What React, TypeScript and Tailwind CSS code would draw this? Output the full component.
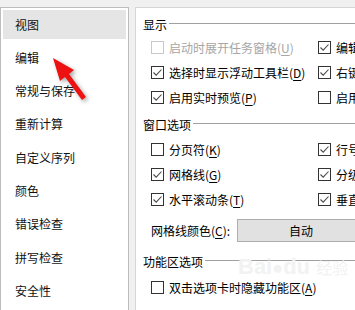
import React from "react";

const font = { fontFamily: '"Noto Sans CJK SC", "Noto Sans", sans-serif' };

const menu = ["视图", "编辑", "常规与保存", "重新计算", "自定义序列", "颜色", "错误检查", "拼写检查", "安全性"];

function Box({ checked, disabled }: { checked?: boolean; disabled?: boolean }) {
    return (
        <svg width="13" height="13" viewBox="0 0 13 13" className="shrink-0">
            <rect x="0.5" y="0.5" width="12" height="12" fill="#fff" stroke={disabled ? "#c8c8c8" : "#333"} />
            {checked && <polyline points="2.5,6.5 5.2,9.2 10.5,3.5" fill="none" stroke="#4a4a4a" strokeWidth="1.1" />}
        </svg>
    );
}

function Label({ text, k, disabled }: { text: string; k?: string; disabled?: boolean }) {
    return (
        <span className={`whitespace-nowrap ${disabled ? "text-[#a6a6a6]" : "text-black"}`}>
            {text}
            {k && (
                <>
                    (<span className="underline underline-offset-2">{k}</span>)
                </>
            )}
        </span>
    );
}

function Check({ text, k, checked, disabled }: { text: string; k?: string; checked?: boolean; disabled?: boolean }) {
    return (
        <div className="flex items-center gap-[5px] w-[167px] shrink-0">
            <Box checked={checked} disabled={disabled} />
            <Label text={text} k={k} disabled={disabled} />
        </div>
    );
}

function Header({ title, className }: { title: string; className: string }) {
    return (
        <div className={`flex items-center h-[18px] ${className}`}>
            <span className="whitespace-nowrap text-black">{title}</span>
            <div className="flex-1 h-px bg-[#a0a0a0] ml-[2px] -mt-[3px]" />
        </div>
    );
}

export default function App() {
    return (
        <div className="relative w-[355px] h-[310px] overflow-hidden bg-[#f0f0f0] pt-[7px] flex text-[12px] leading-[16px]" style={font}>
            {/* sidebar */}
            <div className="w-[129px] h-full border-l border-t border-r border-[#bdbdbd] bg-white pt-[2px] px-[2px] shrink-0">
                {menu.map((m, i) => (
                    <div
                        key={m}
                        className={`h-[29px] mb-[4.3px] flex items-center pl-[12px] text-[#111] ${i === 0 ? "bg-[#e5e5e5]" : ""}`}
                    >
                        {m}
                    </div>
                ))}
            </div>

            {/* options */}
            <div className="ml-[6px] flex-1 h-full border-l border-t border-[#d6d6d6] bg-white pl-[7px] flex flex-col">
                <Header title="显示" className="mt-[8px]" />
                <div className="pl-[8px] flex flex-col mt-[1px]">
                    <div className="flex items-center h-[25px]">
                        <Check text="启动时展开任务窗格" k="U" disabled />
                        <Check text="编辑栏(F)" checked />
                    </div>
                    <div className="flex items-center h-[25px]">
                        <Check text="选择时显示浮动工具栏" k="D" checked />
                        <Check text="右键时显示浮动工具栏" checked />
                    </div>
                    <div className="flex items-center h-[25px]">
                        <Check text="启用实时预览" k="P" checked />
                        <Check text="启用触摸模式" />
                    </div>
                </div>

                <Header title="窗口选项" className="mt-[6px]" />
                <div className="pl-[8px] flex flex-col mt-[3px]">
                    <div className="flex items-center h-[25px]">
                        <Check text="分页符" k="K" />
                        <Check text="行号列标" checked />
                    </div>
                    <div className="flex items-center h-[25px]">
                        <Check text="网格线" k="G" checked />
                        <Check text="分级显示符号" checked />
                    </div>
                    <div className="flex items-center h-[25px]">
                        <Check text="水平滚动条" k="T" checked />
                        <Check text="垂直滚动条" checked />
                    </div>
                </div>

                <div className="pl-[8px] mt-[7px] flex items-center h-[23px]">
                    <span className="w-[86px] shrink-0 whitespace-nowrap">
                        <Label text="网格线颜色" k="C" />:
                    </span>
                    <div className="w-[128px] shrink-0 h-[23px] bg-[#e1e1e1] border border-[#adadad] flex items-center justify-center">
                        自动
                    </div>
                </div>

                <Header title="功能区选项" className="mt-[11px]" />
                <div className="pl-[8px] mt-[4px] flex items-center h-[25px]">
                    <div className="flex items-center gap-[5px]">
                        <Box />
                        <Label text="双击选项卡时隐藏功能区" k="A" />
                    </div>
                </div>
            </div>

            {/* watermark */}
            <div className="absolute left-[238px] top-[254px] text-[22px] leading-[26px] font-bold text-[#f2f2f2] whitespace-nowrap pointer-events-none" style={{ fontFamily: '"Liberation Sans", sans-serif' }}>
                Bai<span className="text-[18px]">●</span>du <span style={font} className="font-normal text-[16px]">经验</span>
            </div>

            {/* red arrow */}
            <svg className="absolute left-0 top-0 pointer-events-none drop-shadow-[2px_2px_2px_rgba(0,0,0,0.35)]" width="120" height="120" viewBox="0 0 120 120">
                <polygon points="53,58 74,70 69,74 86,97 82,100 65,77 60,81" fill="#ee1111" />
            </svg>
        </div>
    );
}
